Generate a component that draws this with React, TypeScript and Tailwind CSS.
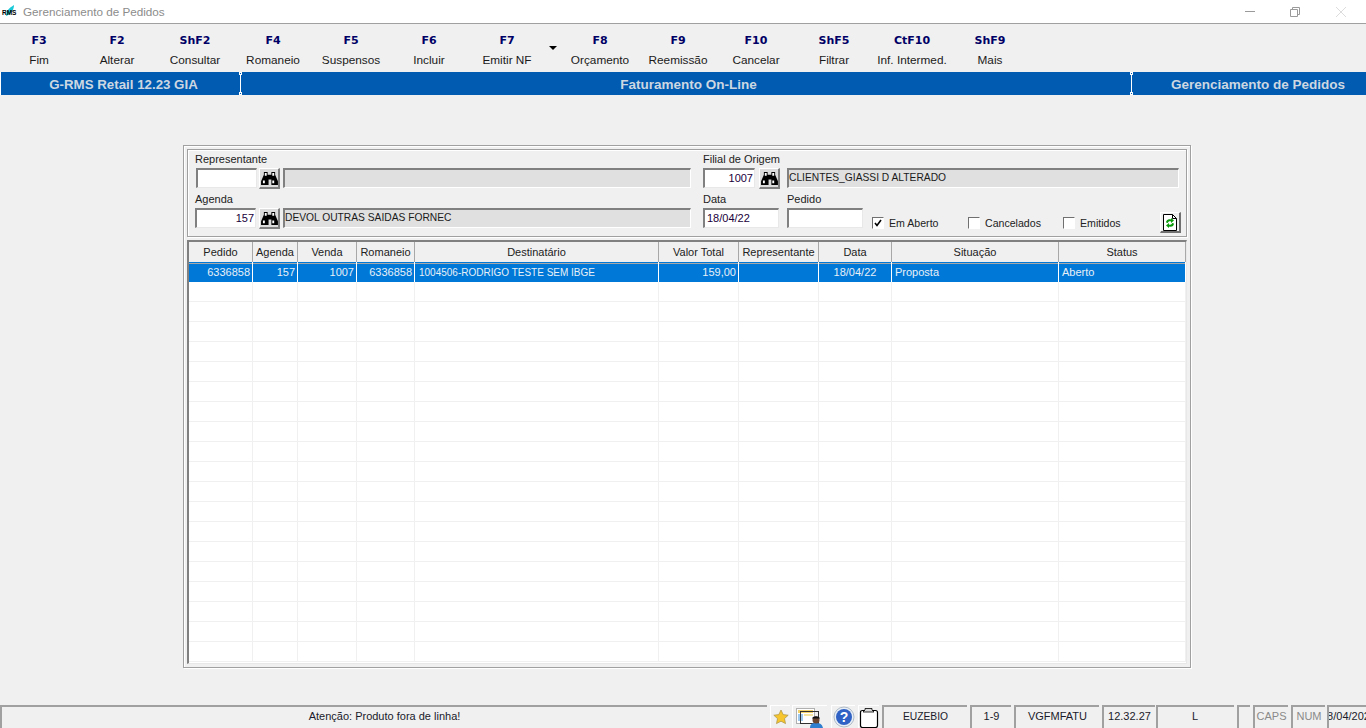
import type { ReactNode } from "react";

const SANS = "font-['Liberation_Sans',Arial,sans-serif]";

const TOOLBAR_LEFT = [
  { key: "F3", label: "Fim" },
  { key: "F2", label: "Alterar" },
  { key: "ShF2", label: "Consultar" },
  { key: "F4", label: "Romaneio" },
  { key: "F5", label: "Suspensos" },
  { key: "F6", label: "Incluir" },
  { key: "F7", label: "Emitir NF" },
];

const TOOLBAR_RIGHT = [
  { key: "F8", label: "Orçamento" },
  { key: "F9", label: "Reemissão" },
  { key: "F10", label: "Cancelar" },
  { key: "ShF5", label: "Filtrar" },
  { key: "CtF10", label: "Inf. Intermed." },
  { key: "ShF9", label: "Mais" },
];

const COLUMNS = ["Pedido", "Agenda", "Venda", "Romaneio", "Destinatário", "Valor Total", "Representante", "Data", "Situação", "Status"];

const ROW = [
  { text: "6336858", cls: "px-[2px] text-right" },
  { text: "157", cls: "px-[2px] text-right" },
  { text: "1007", cls: "px-[2px] text-right" },
  { text: "6336858", cls: "px-[2px] text-right" },
  { text: "1004506-RODRIGO TESTE SEM IBGE", cls: "pt-px pl-[4px] text-left text-[10px]" },
  { text: "159,00", cls: "px-[2px] text-right" },
  { text: "", cls: "text-left" },
  { text: "18/04/22", cls: "text-center" },
  { text: "Proposta", cls: "pl-[3px] text-left" },
  { text: "Aberto", cls: "pl-[3px] text-left" },
];

const GRID_COLS = "grid grid-cols-[64px_45px_59px_58px_244px_80px_80px_73px_167px_127px]";

function ToolButton({ fkey, label }: { fkey: string; label: string }) {
  return (
    <div className="flex w-[78px] flex-col items-center">
      <span className="h-[21px] pt-[10px] font-['DejaVu_Sans',sans-serif] text-[11px] leading-[13px] font-bold text-[#000066]">{fkey}</span>
      <span className="mt-[8px] text-[11.8px] leading-[14px] whitespace-nowrap text-[#1a1a1a]">{label}</span>
    </div>
  );
}

function Binoculars() {
  return (
    <svg viewBox="0 0 18 16" className="h-[15px] w-[17px]" aria-hidden="true">
      <path fill="#000" d="M3 1h4v3h4V1h4v3l3 7v4h-7V9H8v6H0v-4l3-7z" />
      <path fill="#fff" d="M2 10h2v3H2zM12 10h2v3h-2zM4 2h2v3H4zM12 2h2v3h-2z" />
    </svg>
  );
}

function FindButton() {
  return (
    <div className="flex h-[21px] w-[21px] shrink-0 items-center justify-center border-t border-r-2 border-b-2 border-l border-t-white border-r-[#808080] border-b-[#808080] border-l-white bg-[#dcdcdc]">
      <Binoculars />
    </div>
  );
}

function Input({ value, className, align = "right" }: { value?: string; className: string; align?: "left" | "right" }) {
  return (
    <div
      className={`h-[20px] shrink-0 border-t-2 border-r border-b border-l-2 border-t-[#808080] border-r-[#e8e8e8] border-b-[#e8e8e8] border-l-[#808080] bg-white text-[11px] leading-[17px] text-[#20003a] ${
        align === "right" ? "pr-[1px] text-right" : "pl-[2px] text-left"
      } ${className}`}
    >
      {value}
    </div>
  );
}

function ReadOnly({ value, className }: { value?: string; className: string }) {
  return (
    <div className={`h-[20px] shrink-0 border-t-2 border-r border-b border-l-2 border-t-[#808080] border-r-white border-b-white border-l-[#808080] bg-[#e0e0e0] text-[10.25px] leading-[15px] text-[#1a1a1a] ${className}`}>
      {value}
    </div>
  );
}

function Check({ label, checked, className }: { label: string; checked?: boolean; className: string }) {
  return (
    <div className={`flex items-center ${className}`}>
      <div className="flex h-[12px] w-[12px] shrink-0 items-center justify-center border border-t-[#707070] border-r-white border-b-white border-l-[#707070] bg-white">
        {checked && (
          <svg viewBox="0 0 10 10" className="h-[10px] w-[10px]" aria-hidden="true">
            <path d="M2 5l2 2.500L8 2" fill="none" stroke="#000" strokeWidth="1.600" />
          </svg>
        )}
      </div>
      <span className="ml-[5px] text-[10.6px] leading-[14px] whitespace-nowrap text-[#222]">{label}</span>
    </div>
  );
}

function StatusCell({ children, className }: { children?: ReactNode; className: string }) {
  return (
    <div className={`flex h-[23px] shrink-0 items-center justify-center border-t-2 border-l-2 border-t-[#a0a0a0] border-l-[#a0a0a0] pb-[2px] text-[#1a1a2a] ${className}`}>
      {children}
    </div>
  );
}

function StatusIcon({ children, className }: { children: ReactNode; className: string }) {
  return <div className={`flex h-[23px] shrink-0 items-center justify-center border-t border-l border-t-white border-l-white ${className}`}>{children}</div>;
}

function Notch({ className }: { className: string }) {
  return <div className={`absolute h-[3px] w-[3px] border border-white bg-[#005bb1] ${className}`} />;
}

export default function App() {
  return (
    <div className={`flex h-[728px] w-[1366px] flex-col overflow-hidden bg-[#f0f0f0] ${SANS}`}>
      {/* title bar */}
      <div className="flex h-[24px] shrink-0 items-center border-b border-[#a0a0a0] bg-white">
        <div className="relative ml-[2px] h-[16px] w-[17px] shrink-0">
          <svg viewBox="0 0 17 16" className="absolute top-0 left-0 h-[16px] w-[17px]" aria-hidden="true">
            <path d="M4 12C4 7 7 4 12 1c0 5-3 9-8 11z" fill="#19c9d8" />
          </svg>
          <span className="absolute top-[5px] left-0 text-[6.500px] leading-[7px] font-bold text-black">RMS</span>
        </div>
        <span className="ml-[4px] text-[11.700px] text-[#8c8c8c]">Gerenciamento de Pedidos</span>
        <div className="ml-auto flex items-center">
          <div className="mr-[35px] h-px w-[10px] bg-[#9a9a9a]" />
          <svg viewBox="0 0 10 10" className="mr-[36px] h-[10px] w-[10px]" aria-hidden="true">
            <path d="M2.500 2.500V.5h7v7h-2M.5 2.500h7v7h-7z" fill="none" stroke="#9a9a9a" />
          </svg>
          <svg viewBox="0 0 10 10" className="mr-[20px] h-[10px] w-[10px]" aria-hidden="true">
            <path d="M0 0l10 10M10 0L0 10" stroke="#dcdcdc" />
          </svg>
        </div>
      </div>

      {/* function keys */}
      <div className="flex h-[48px] shrink-0">
        {TOOLBAR_LEFT.map((b) => (
          <ToolButton key={b.key} fkey={b.key} label={b.label} />
        ))}
        <div className="relative w-[15px] shrink-0">
          <div className="absolute top-[22px] left-[3px] h-0 w-0 border-t-[4px] border-r-[4px] border-l-[4px] border-t-black border-r-transparent border-l-transparent" />
        </div>
        {TOOLBAR_RIGHT.map((b) => (
          <ToolButton key={b.key} fkey={b.key} label={b.label} />
        ))}
      </div>

      {/* blue header */}
      <div className="flex h-[23px] shrink-0 bg-[#005bb1] text-[13.300px] leading-[25px] font-bold text-[#cdd7e2]">
        <div className="relative w-[241px] shrink-0 border-r border-l border-white pl-[6px] text-center">
          G-RMS Retail 12.23 GIA
          <Notch className="top-0 -right-[2px]" />
          <Notch className="-right-[2px] bottom-0" />
        </div>
        <div className="flex-1 pl-[5px] text-center text-[13.5px]">Faturamento On-Line</div>
        <div className="relative w-[235px] shrink-0 border-l border-white pr-[21px] text-right text-[13.5px]">
          Gerenciamento de Pedidos
          <Notch className="top-0 -left-[2px]" />
          <Notch className="bottom-0 -left-[2px]" />
        </div>
      </div>

      {/* main panel */}
      <div className="mt-[50px] ml-[183px] flex h-[523px] w-[1008px] shrink-0 flex-col border border-[#a0a0a0] p-[3px] shadow-[inset_1px_1px_0_#fff,1px_1px_0_#fff]">
        {/* filters */}
        <div className="h-[88px] shrink-0 border border-[#a0a0a0] pl-[7px] shadow-[inset_1px_1px_0_#fff,1px_1px_0_#fff]">
          <div className="mt-[2px] flex h-[14px] text-[11px] leading-[14px] text-[#222]">
            <span className="w-[508px] shrink-0">Representante</span>
            <span>Filial de Origem</span>
          </div>
          <div className="mt-[2px] flex">
            <Input className="ml-px w-[61px]" />
            <div className="ml-[2px]">
              <FindButton />
            </div>
            <ReadOnly className="ml-[3px] w-[408px]" />
            <Input value="1007" className="ml-[12px] w-[52px]" />
            <div className="ml-[4px]">
              <FindButton />
            </div>
            <ReadOnly value="CLIENTES_GIASSI D ALTERADO" className="ml-[7px] w-[392px]" />
          </div>
          <div className="mt-[3px] flex h-[14px] text-[11px] leading-[14px] text-[#222]">
            <span className="w-[508px] shrink-0">Agenda</span>
            <span className="w-[84px] shrink-0">Data</span>
            <span>Pedido</span>
          </div>
          <div className="mt-[2px] flex items-start">
            <Input value="157" className="w-[61px]" />
            <div className="ml-[3px]">
              <FindButton />
            </div>
            <ReadOnly value="DEVOL OUTRAS SAIDAS FORNEC" className="ml-[3px] w-[408px]" />
            <Input value="18/04/22" align="left" className="ml-[12px] w-[76px]" />
            <Input className="ml-[8px] w-[76px]" />
            <Check label="Em Aberto" checked className="mt-[8px] ml-[9px] w-[96px]" />
            <Check label="Cancelados" className="mt-[8px] w-[95px]" />
            <Check label="Emitidos" className="mt-[8px] w-[97px]" />
            <div className="mt-[4px] flex h-[21px] w-[21px] shrink-0 items-center justify-center border-t border-r-2 border-b-2 border-l border-t-white border-r-[#707070] border-b-[#707070] border-l-white bg-[#f0f0f0]">
              <svg viewBox="0 0 14 17" className="h-[17px] w-[14px]" aria-hidden="true">
                <path d="M.5.5h9l4 4v12H.5z" fill="#fff" stroke="#000" />
                <path d="M9.500.5v4h4" fill="none" stroke="#000" />
                <path d="M3 8.500C3 6 5.500 4.500 8 5.500V4l3 2.500L8 9V7.500C6.500 7 5 7.500 5 9zM11 9.500c0 2.500-2.500 4-5 3V14l-3-2.500L6 9v1.500c1.500.5 3 0 3-1.500z" fill="#0a9a0a" />
              </svg>
            </div>
          </div>
        </div>

        {/* orders grid */}
        <div className="mt-[3px] flex-1 overflow-hidden border-2 border-r border-b border-[#808080] border-r-[#e8e8e8] border-b-[#e8e8e8] bg-white text-[11px]">
          <div className={`${GRID_COLS} h-[20px] bg-[#f0f0f0] leading-[21px] text-[#222]`}>
            {COLUMNS.map((c) => (
              <div key={c} className="border-r border-b border-r-[#a8a8a8] border-b-[#a8a8a8] text-center whitespace-nowrap">
                {c}
              </div>
            ))}
          </div>
          <div className={`${GRID_COLS} h-[20px] bg-[#0078d7] leading-[20px] text-[#e8f0f8]`}>
            {ROW.map((cell, i) => (
              <div key={i} className={`overflow-hidden border-r border-white whitespace-nowrap ${cell.cls}`}>
                {cell.text}
              </div>
            ))}
          </div>
          {Array.from({ length: 19 }, (_, r) => (
            <div key={r} className={`${GRID_COLS} h-[20px]`}>
              {COLUMNS.map((c) => (
                <div key={c} className="border-r border-b border-[#f0f0f0]" />
              ))}
            </div>
          ))}
        </div>
      </div>

      {/* status bar */}
      <div className="mt-auto flex h-[23px] shrink-0 bg-[#f0f0f0] text-[11px]">
        <StatusCell className="w-[767px]">Atenção: Produto fora de linha!</StatusCell>
        <StatusIcon className="ml-[3px] w-[20px]">
          <svg viewBox="0 0 16 16" className="h-[16px] w-[16px]" aria-hidden="true">
            <path d="M8 1l2.200 4.600 5 .6-3.700 3.400 1 5L8 12.200 3.500 14.600l1-5L.8 6.200l5-.6z" fill="#f7c62f" stroke="#a89040" strokeWidth="0.700" />
          </svg>
        </StatusIcon>
        <StatusIcon className="ml-[2px] w-[35px]">
          <svg viewBox="0 0 28 22" className="h-[22px] w-[28px]" aria-hidden="true">
            <rect x="0.500" y="2.500" width="18" height="15" fill="#fff" stroke="#b0b0b0" />
            <rect x="2" y="4" width="15" height="3" fill="#f2d36b" />
            <rect x="2" y="8" width="5" height="7" fill="#9cc8ee" />
            <rect x="8" y="8" width="9" height="2" fill="#f5e3a0" />
            <rect x="4.500" y="5.500" width="18" height="12" fill="none" stroke="#303030" />
            <path d="M14 22c0-4 2-5 6-5s6 1 7 5z" fill="#2f7fd0" />
            <circle cx="20" cy="14" r="3.500" fill="#6a4530" />
            <path d="M16 12.500c1-3 7-3 8 0z" fill="#111" />
          </svg>
        </StatusIcon>
        <StatusIcon className="ml-[4px] w-[24px]">
          <svg viewBox="0 0 22 22" className="h-[22px] w-[22px]" aria-hidden="true">
            <circle cx="11" cy="11" r="10" fill="#e8eef6" stroke="#b0bcc8" />
            <circle cx="11" cy="11" r="8" fill="#2f62c4" />
            <text x="11" y="16" textAnchor="middle" fontSize="14" fontWeight="700" fill="#fff" fontFamily="Liberation Sans">?</text>
          </svg>
        </StatusIcon>
        <StatusIcon className="ml-[3px] w-[21px]">
          <svg viewBox="0 0 20 21" className="h-[21px] w-[20px]" aria-hidden="true">
            <path d="M1.500 5.500q0-2 2-2h13q2 0 2 2v13q0 2-2 2h-13q-2 0-2-2z" fill="#fff" stroke="#000" strokeWidth="1.200" />
            <path d="M4 5l2-2V1.500h7V3l2 2z" fill="#d8d8d8" stroke="#000" strokeWidth="0.800" />
          </svg>
        </StatusIcon>
        <StatusCell className="ml-[3px] w-[85px] text-[10.300px]">EUZEBIO</StatusCell>
        <StatusCell className="ml-[3px] w-[41px]">1-9</StatusCell>
        <StatusCell className="ml-[3px] w-[85px]">VGFMFATU</StatusCell>
        <StatusCell className="ml-[3px] w-[53px]">12.32.27</StatusCell>
        <StatusCell className="ml-[1px] w-[78px] pr-[2px]">L</StatusCell>
        <StatusCell className="ml-[3px] w-[13px]" />
        <StatusCell className="ml-[3px] w-[35px] text-[#8a8a8a]">CAPS</StatusCell>
        <StatusCell className="ml-[3px] w-[34px] text-[#8a8a8a]">NUM</StatusCell>
        <StatusCell className="ml-[2px] w-[39px] justify-start overflow-hidden">
          <span className="-ml-[8px] whitespace-nowrap">18/04/2022</span>
        </StatusCell>
      </div>
    </div>
  );
}
